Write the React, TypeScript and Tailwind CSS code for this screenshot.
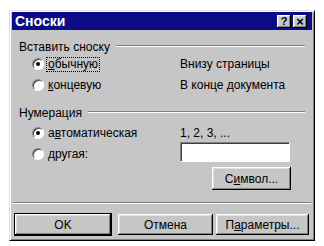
import React from 'react';

const raised =
  'bg-[#c6c6c6] shadow-[inset_-1px_-1px_#000,inset_1px_1px_#fff,inset_-2px_-2px_#808080,inset_2px_2px_#dfdfdf]';

function Radio({ checked }: { checked?: boolean }) {
  return (
    <span className="flex h-[12px] w-[12px] shrink-0 items-center justify-center rounded-full border border-b-white border-l-[#808080] border-r-white border-t-[#808080] bg-white shadow-[inset_1px_1px_#404040]">
      {checked && <span className="h-[4px] w-[4px] rounded-full bg-black" />}
    </span>
  );
}

function GroupTitle({ label }: { label: string }) {
  return (
    <div className="flex h-[14px] items-center">
      <span className="leading-none">{label}</span>
      <div className="ml-[6px] mt-[-2px] flex-1 border-b border-t border-b-white border-t-[#808080]" />
    </div>
  );
}

function Button({ children, width, isDefault }: { children: React.ReactNode; width: string; isDefault?: boolean }) {
  return (
    <div
      className={`flex h-[21px] items-center justify-center ${width} ${raised} ${isDefault ? 'outline outline-1 outline-black' : ''}`}
    >
      {children}
    </div>
  );
}

export default function App() {
  return (
    <div className="h-[246px] w-[324px] bg-white pl-[9px] pt-[10px] font-['Liberation_Sans',Arial,sans-serif] text-[12px] text-black">
      <div className="flex h-[231px] w-[306px] flex-col border border-b-black border-l-[#e0e0e0] border-r-black border-t-[#e0e0e0] bg-[#c6c6c6] p-[2px] pt-[1px] shadow-[inset_1px_1px_#fff,inset_-1px_-1px_#808080]">
        {/* title bar */}
        <div className="flex h-[18px] items-center bg-[#0c0c84] pl-[3px] pr-[5px]">
          <span className="flex-1 text-[14px] font-bold text-white">Сноски</span>
          <div className={`flex h-[13px] w-[14px] items-center justify-center text-[11px] font-bold leading-none ${raised}`}>?</div>
          <div className={`ml-[2px] flex h-[13px] w-[14px] items-center justify-center text-[13px] font-bold leading-none ${raised}`}>×</div>
        </div>

        <div className="flex flex-col px-[7px]">
          <div className="mt-[10px]">
            <GroupTitle label="Вставить сноску" />
          </div>

          <div className="mt-[2px] flex h-[16px] items-center">
            <div className="flex w-[161px] items-center pl-[13px]">
              <Radio checked />
              <span className="ml-[2px] border border-dotted border-black px-[1px] leading-[13px]">
                <span className="underline">о</span>бычную
              </span>
            </div>
            <span>Внизу страницы</span>
          </div>

          <div className="mt-[5px] flex h-[16px] items-center">
            <div className="flex w-[161px] items-center pl-[13px]">
              <Radio />
              <span className="ml-[4px]">
                <span className="underline">к</span>онцевую
              </span>
            </div>
            <span>В конце документа</span>
          </div>

          <div className="mt-[13px]">
            <GroupTitle label="Нумерация" />
          </div>

          <div className="mt-[5px] flex h-[16px] items-center">
            <div className="flex w-[161px] items-center pl-[13px]">
              <Radio checked />
              <span className="ml-[4px]">
                а<span className="underline">в</span>томатическая
              </span>
            </div>
            <span>1, 2, 3, ...</span>
          </div>

          <div className="mt-[1px] flex h-[20px] items-center">
            <div className="flex w-[161px] items-center pl-[13px] pt-[3px]">
              <Radio />
              <span className="ml-[4px]">
                <span className="underline">д</span>ругая:
              </span>
            </div>
            <div className="h-[20px] w-[110px] border border-b-white border-l-[#808080] border-r-white border-t-[#808080] bg-white shadow-[inset_1px_1px_#404040]" />
          </div>

          <div className="mt-[5px] flex justify-end pr-[14px]">
            <div className={`flex h-[23px] w-[79px] items-center justify-center ${raised}`}>
              С<span className="underline">и</span>мвол...
            </div>
          </div>
        </div>

        <div className="mx-[1px] mt-[12px] border-b border-t border-b-white border-t-[#808080]" />

        <div className="mt-[10px] flex pl-[3px]">
          <Button width="w-[96px]" isDefault>
            OK
          </Button>
          <div className="ml-[7px]">
            <Button width="w-[95px]">Отмена</Button>
          </div>
          <div className="ml-[3px]">
            <Button width="w-[93px]">
              П<span className="underline">а</span>раметры...
            </Button>
          </div>
        </div>
      </div>
    </div>
  );
}
